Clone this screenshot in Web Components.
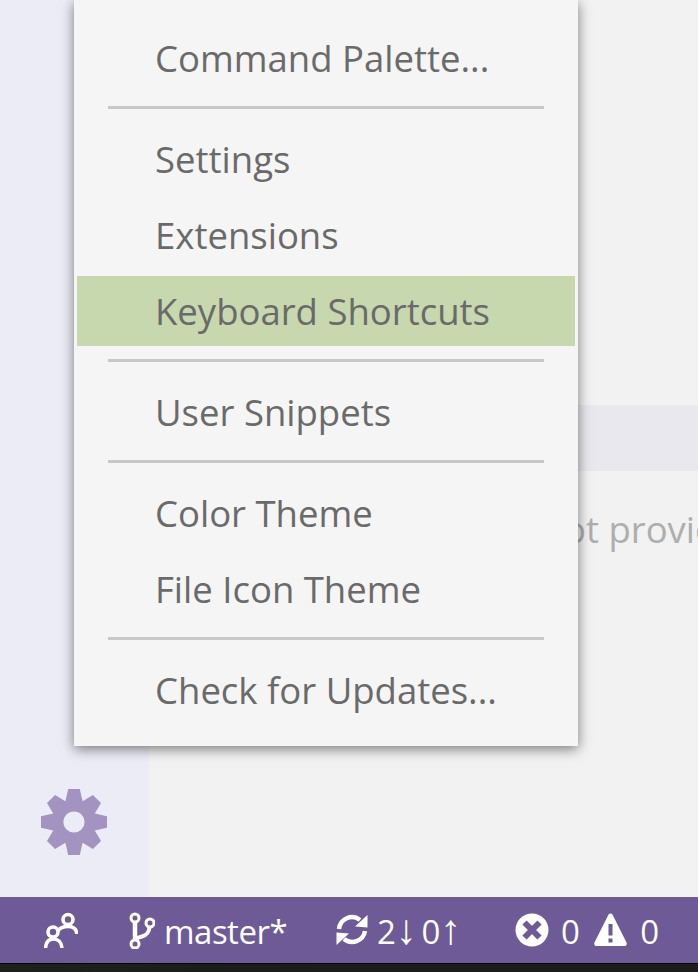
<!DOCTYPE html>
<html><head><meta charset="utf-8">
<style>
html,body{margin:0;padding:0;height:972px;overflow:hidden;background:#1b1b1b}
body{font-family:"Open Sans","Noto Sans",sans-serif}
</style></head><body>
<template id="t-shell"><style>
:host{display:grid;grid-template-rows:897px 66px 9px;width:698px;height:972px;position:relative;overflow:hidden}
.top{display:grid;grid-template-columns:149px 1fr;min-height:0}
.strip{background:linear-gradient(90deg,#1c211a,#1b1b1b 45%);border-top:1px solid #000;box-sizing:border-box}
</style><div class="top"><slot name="activity"></slot><slot name="main"></slot></div><slot name="status"></slot><div class="strip"></div><slot name="menu"></slot></template>

<template id="t-activity"><style>
:host{display:flex;flex-direction:column;justify-content:flex-end;align-items:flex-start;background:#ececf6;padding:0 0 42px 41px;box-sizing:border-box}
svg{display:block}
</style>
<svg width="66" height="66" viewBox="0 0 66 66"><path fill="#a393c0" fill-rule="evenodd" d="M38.800 0L41.600 12.200L51.900 6L60 14.100L53.800 24.400L66 27.200V38.800L53.800 41.600L60 51.900L51.900 60L41.600 53.800L38.800 66H27.200L24.400 53.800L14.100 60L6 51.900L12.200 41.600L0 38.800V27.200L12.200 24.400L6 14.100L14.100 6L24.400 12.200L27.200 0zM33 22.400a10.600 10.600 0 1 0 0 21.200a10.600 10.600 0 0 0 0-21.200z"/></svg></template>

<template id="t-main"><style>
:host{display:flex;flex-direction:column;background:#f2f2f2;overflow:hidden;padding-top:405px;box-sizing:border-box}
.band{height:66px;background:#e9e8ef;flex:none}
.msg{margin:33px 0 0 201px;white-space:nowrap;font-size:36.500px;line-height:50px;color:#aeaeae}
</style><div class="band"></div><div class="msg"><slot></slot></div></template>

<template id="t-menu"><style>
:host{display:block;position:absolute;left:74px;top:0;width:504px;height:746px;box-sizing:border-box;background:#f5f5f5;box-shadow:0 3px 12px rgba(0,0,0,.5);padding:23px 3px 0}
</style><slot></slot></template>

<template id="t-item"><style>
:host{display:block;height:70px;line-height:70px;padding-left:78px;font-size:36.500px;color:#6a6a6a;white-space:nowrap}
:host([hl]){background:#c7d7ae}
:host([gap]){margin-top:6px}
</style><slot></slot></template>

<template id="t-sep"><style>
:host{display:block;height:3px;background:#c8c8c8;margin:13px 31px 15px}
</style></template>

<template id="t-status"><style>
:host{display:flex;align-items:center;background:#6d5a96;color:#fff;font-size:33px;letter-spacing:-.5px;height:66px;position:relative;white-space:nowrap}
svg{display:block;flex:none}
span.t{padding-top:4px;line-height:46px}
.ar{font-family:"Liberation Sans",sans-serif;font-size:42px;line-height:0;letter-spacing:-3px}
.a{margin-left:44px}.b{margin-left:51px}.c{margin-left:9px}
.d{margin-left:49px}.e{margin-left:9px}.f{margin-left:57px}
.g{margin-left:12px}.h{margin-left:15px}.i{margin-left:13px}
</style>
<svg class="a" width="34" height="36" viewBox="0 0 34 36" fill="none" stroke="#fff" stroke-width="3.600"><circle cx="24" cy="7.500" r="5"/><path d="M14 19c2-3.500 5-4.500 10-4.500S32.500 17 32.800 22"/><circle cx="9" cy="20" r="5"/><path d="M1.500 36c.5-6 3.500-9 8-9s8 3 8.500 9"/></svg>
<svg class="b" width="26" height="37" viewBox="0 0 26 37" fill="none" stroke="#fff" stroke-width="3"><circle cx="6" cy="6" r="4"/><circle cx="6" cy="32" r="4"/><circle cx="21" cy="11" r="4"/><path d="M6 10v18" stroke-width="4.500"/><path d="M20.500 15c-.5 6-3 8-7.500 9.500-3.500 1-6 1.500-7 4" stroke-width="4"/></svg>
<span class="c t">master*</span>
<svg class="d" width="32" height="32" viewBox="0 0 32 32" fill="none" stroke="#fff" stroke-width="4.500"><path d="M3 15A13 13 0 0 1 24 6"/><path d="M29 17A13 13 0 0 1 8 25"/><path fill="#fff" stroke="none" d="M31.500 1V13.500L19 12.500zM.5 31V18.500L13 19.500z"/></svg>
<span class="e t">2<span class="ar">↓</span> 0<span class="ar">↑</span></span>
<svg class="f" width="34" height="34" viewBox="0 0 34 34"><circle cx="17" cy="17" r="16.500" fill="#fff"/><path d="M9.500 9.500l15 15M24.500 9.500l-15 15" stroke="#6d5a96" stroke-width="6"/></svg>
<span class="g t">0</span>
<svg class="h" width="33" height="34" viewBox="0 0 33 34"><path fill="#fff" d="M16.500 0.500c1 0 1.700.5 2.200 1.500L32.500 29.500c.7 1.800-.2 3.500-2.200 3.500H2.700c-2 0-2.900-1.700-2.200-3.500L14.300 2c.5-1 1.200-1.500 2.200-1.500z"/><path fill="#6d5a96" d="M14.500 11h4v11.500h-4zM14.500 25.500h4v4h-4z"/></svg>
<span class="i t">0</span></template>

<app-shell>
  <app-activity slot="activity"></app-activity>
  <app-main slot="main">Repository not provided</app-main>
  <app-status slot="status"></app-status>
  <app-menu slot="menu">
    <menu-item>Command Palette...</menu-item>
    <menu-sep></menu-sep>
    <menu-item>Settings</menu-item>
    <menu-item gap>Extensions</menu-item>
    <menu-item gap hl>Keyboard Shortcuts</menu-item>
    <menu-sep></menu-sep>
    <menu-item>User Snippets</menu-item>
    <menu-sep></menu-sep>
    <menu-item>Color Theme</menu-item>
    <menu-item gap>File Icon Theme</menu-item>
    <menu-sep></menu-sep>
    <menu-item>Check for Updates...</menu-item>
  </app-menu>
</app-shell>
<script>
const defs={'app-shell':'t-shell','app-activity':'t-activity','app-main':'t-main','app-menu':'t-menu','menu-item':'t-item','menu-sep':'t-sep','app-status':'t-status'};
for(const [name,id] of Object.entries(defs)){
  customElements.define(name,class extends HTMLElement{
    constructor(){super();this.attachShadow({mode:'open'}).appendChild(document.getElementById(id).content.cloneNode(true));}
  });
}
</script>
</body></html>
